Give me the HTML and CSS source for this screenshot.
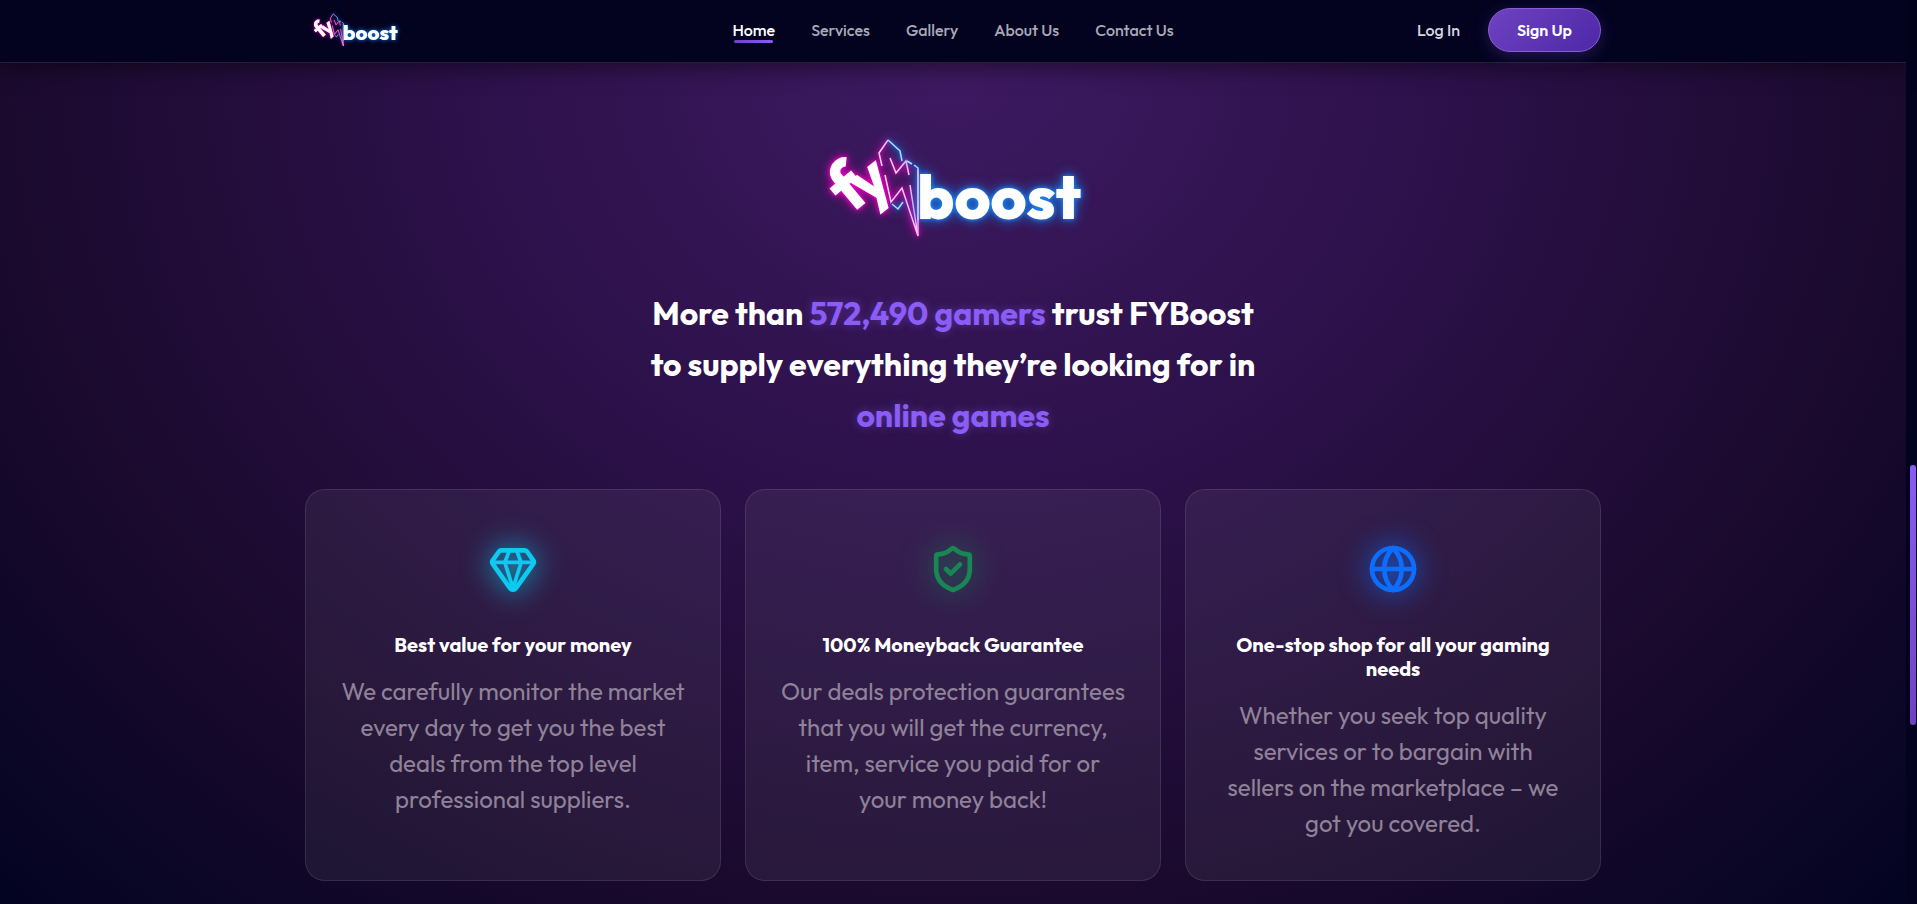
FILE: index.html
```html
<!DOCTYPE html>
<html lang="en">
<head>
  <meta charset="UTF-8" />
  <meta name="viewport" content="width=device-width, initial-scale=1.0" />
  <title>FYBoost</title>
  <link rel="stylesheet" href="styles.css">
</head>
<body>
  <div class="page">
    <header class="header">
      <div class="container header-row">
        <a href="#" class="brand" aria-label="FYBoost">
          <svg class="brand-logo" viewBox="4 0 300 140"><use href="#logo" /></svg>
        </a>
        <nav class="nav">
          <a href="#" class="nav-link active">Home</a>
          <a href="#" class="nav-link">Services</a>
          <a href="#" class="nav-link">Gallery</a>
          <a href="#" class="nav-link">About Us</a>
          <a href="#" class="nav-link">Contact Us</a>
        </nav>
        <div class="account">
          <a href="#" class="login">Log In</a>
          <button type="button" class="signup">Sign Up</button>
        </div>
      </div>
    </header>

    <main class="trust">
      <div class="container">
        <svg class="hero-logo" viewBox="4 0 300 140" role="img" aria-label="FYBoost">
          <g id="logo">
            <g class="logo-pink">
              <text class="logo-text" font-size="70" transform="translate(52 95) rotate(-40)">f</text>
              <text class="logo-text" font-size="66" transform="translate(69 87) rotate(-38)">y</text>
              <path class="logo-line" d="M89 20 80 33 83 46 M91 38 97 53 107 41 110 55 M86 55 92 82 103 68 119 116 111 65" />
            </g>
            <g class="logo-blue">
              <path class="logo-line" d="M89 20 101 31 103 41 M108 41 113 44 M115 45 119 48V100 M93 84 99 89 104 82" />
              <text class="logo-text boost" font-size="62" x="118" y="99">boost</text>
            </g>
            <path class="logo-edge" d="M119 50V116" />
          </g>
        </svg>
        <h2 class="headline">
          More than <span>572,490 gamers</span> trust FYBoost<br>
          to supply everything they’re looking for in<br>
          <span>online games</span>
        </h2>

        <div class="cards">
          <article class="card">
            <div class="card-icon cyan">
              <svg viewBox="0 0 24 24">
                <path d="M7 4h10q.6 0 1 .5l2.700 3.800q.5 .7 0 1.500l-7.500 10.500a1.500 1.500 0 0 1 -2.400 0L3.300 9.800q-.5 -.8 0 -1.500L6 4.500q.4 -.5 1 -.5" />
                <path class="facets" d="M3.500 9.200h17M10.300 4.500l-1.800 4.700l3.500 11l3.500 -11l-1.800 -4.700" />
              </svg>
            </div>
            <h3>Best value for your money</h3>
            <p>We carefully monitor the market every day to get you the best deals from the top level professional suppliers.</p>
          </article>

          <article class="card">
            <div class="card-icon green">
              <svg viewBox="0 0 24 24">
                <path d="M11.400 3.300q.6 -.5 1.200 0q2.500 2.300 5.700 2.400q.9 0 .9 .9V12c0 4.500-3 7.500-7.200 9c-4.200-1.500-7.200-4.500-7.200-9V6.600q0 -.9 .9 -.9q3.200 -.1 5.700 -2.400" />
                <path d="M9 12l2 2l4-4" />
              </svg>
            </div>
            <h3>100% Moneyback Guarantee</h3>
            <p>Our deals protection guarantees that you will get the currency, item, service you paid for or<br>your money back!</p>
          </article>

          <article class="card">
            <div class="card-icon blue">
              <svg viewBox="0 0 24 24">
                <circle cx="12" cy="12" r="9" />
                <path d="M3 12h18M12 3c-5 5-5 13 0 18M12 3c5 5 5 13 0 18" />
              </svg>
            </div>
            <h3>One-stop shop for all your gaming needs</h3>
            <p>Whether you seek top quality services or to bargain with sellers on the marketplace – we got you covered.</p>
          </article>
        </div>
      </div>
    </main>
  </div>

  <div class="scrollbar"><div class="scrollbar-thumb"></div></div>
</body>
</html>
```
FILE: styles.css
```css
* {
  box-sizing: border-box;
}
body {
  margin: 0;
  display: flex;
  min-height: 100vh;
  background: #030321;
  color: #fff;
  font-family: "Outfit", "Lato", sans-serif;
}
a {
  color: inherit;
  text-decoration: none;
}
.page {
  flex: 1;
  display: flex;
  flex-direction: column;
}
.container {
  width: 100%;
  max-width: 1320px;
  padding: 0 12px;
  margin: 0 auto;
}

/* logo */
.logo-text {
  font-family: "Outfit", "Lato", sans-serif;
  font-weight: 700;
  fill: #fff;
}
.logo-text.boost {
  font-weight: 800;
}
.logo-line, .logo-edge {
  fill: none;
  stroke: #ffd0f6;
  stroke-width: 1.5;
}
.logo-edge {
  stroke: #f6a4f0;
}
.logo-pink {
  filter: drop-shadow(0 0 2px #f0c) drop-shadow(0 0 5px #d400b0);
}
.logo-blue {
  filter: drop-shadow(0 0 2px #1e90ff) drop-shadow(0 0 6px #1673e0);
}
.logo-blue .logo-line {
  stroke: #9be4ff;
}

/* header */
.header {
  position: relative;
  background: #030320;
  border-bottom: 1px solid #232038;
  box-shadow: 0 4px 24px rgba(0, 0, 0, 0.5);
}
.header-row {
  display: grid;
  grid-template-columns: 1fr auto 1fr;
  align-items: center;
  height: 62px;
  padding-bottom: 2px;
}
.brand-logo {
  display: block;
  width: 100px;
  height: 47px;
}
.nav {
  display: flex;
  gap: 36px;
}
.nav-link {
  position: relative;
  font-size: 16px;
  line-height: 24px;
  font-weight: 500;
  color: #a9a9b8;
}
.nav-link.active {
  color: #fff;
}
.nav-link.active::after {
  content: "";
  position: absolute;
  left: 2px;
  right: 2px;
  bottom: -1px;
  height: 3px;
  border-radius: 2px;
  background: linear-gradient(90deg, #6f42c1, #8b5cf6);
}
.account {
  display: flex;
  justify-content: flex-end;
  align-items: center;
  gap: 28px;
  font-size: 16px;
}
.login {
  font-weight: 500;
  color: #d6d6e0;
}
.signup {
  padding: 0 28px;
  height: 44px;
  border: 1px solid #8560cf;
  border-radius: 22px;
  background: linear-gradient(135deg, #6f42c1, #4c28a8);
  box-shadow: 0 4px 15px rgba(111, 66, 193, 0.3);
  color: #fff;
  font: inherit;
  font-weight: 600;
}

/* trust section */
.trust {
  flex: 1;
  padding: 57px 0 20px;
  background: radial-gradient(ellipse at top, #3e1a62 0%, #2c114a 36%, #1b0a2e 70%, #030421 100%);
  text-align: center;
}
.hero-logo {
  display: block;
  width: 300px;
  height: 140px;
  margin: 0 auto 28px;
}
.headline {
  margin: 0 0 48px;
  font-size: 32px;
  line-height: 51px;
  font-weight: 700;
}
.headline span {
  color: #8b5cf6;
  text-shadow: 0 0 10px rgba(139, 92, 246, 0.4);
}
.cards {
  display: grid;
  grid-template-columns: repeat(3, 1fr);
  gap: 24px;
}
.card {
  padding: 39px 32px;
  border: 1px solid rgba(255, 255, 255, 0.1);
  border-radius: 20px;
  background: rgba(255, 255, 255, 0.06);
}
.card-icon {
  display: flex;
  align-items: center;
  justify-content: center;
  height: 80px;
  margin-bottom: 24px;
}
.card-icon svg {
  width: 56px;
  height: 56px;
  fill: none;
  stroke: currentColor;
  stroke-width: 2;
  stroke-linecap: round;
  stroke-linejoin: round;
  filter: drop-shadow(0 0 15px currentColor);
}
.card-icon .facets {
  stroke-width: 1.6;
}
.cyan {
  color: #0dcaf0;
}
.green {
  color: #198754;
}
.blue {
  color: #0d6efd;
}
.card h3 {
  margin: 0 0 16px;
  font-size: 20px;
  line-height: 24px;
  font-weight: 700;
}
.card p {
  margin: 0;
  font-size: 24px;
  line-height: 36px;
  color: #8f8299;
}

/* page scrollbar */
.scrollbar {
  width: 11px;
  padding: 465px 1px 0 4px;
  background: #030320;
}
.scrollbar-thumb {
  height: 260px;
  border-radius: 3px;
  background: linear-gradient(#8b5cf6, #6f42c1);
}
```
